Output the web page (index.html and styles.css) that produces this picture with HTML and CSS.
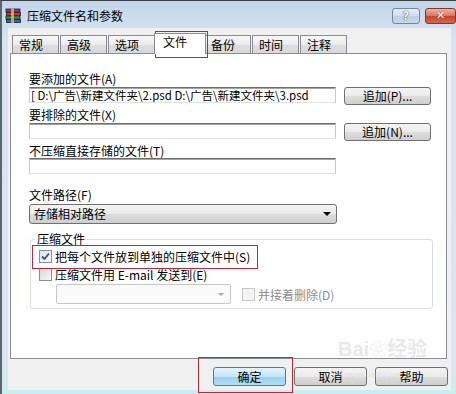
FILE: index.html
```html
<!DOCTYPE html>
<html lang="zh-CN">
<head>
    <meta charset="UTF-8">
    <title>压缩文件名和参数</title>
    <link rel="stylesheet" href="styles.css">
</head>
<body>

<div class="window">
    <div class="titlebar">
        <svg class="app-icon" width="17" height="15" viewBox="0 0 17 15">
            <rect x="1" y="1" width="14" height="3" fill="#7b3d93" stroke="#2a1a33" stroke-width="0.8"/>
            <rect x="1.5" y="4.5" width="14" height="3" fill="#c8343a" stroke="#3a1414" stroke-width="0.8"/>
            <rect x="1" y="8" width="14" height="3" fill="#3d8f3a" stroke="#163016" stroke-width="0.8"/>
            <rect x="1.5" y="11.5" width="14" height="3" fill="#3a5fae" stroke="#14203a" stroke-width="0.8"/>
            <rect x="6" y="0.5" width="3" height="14.5" fill="#d8b46a" opacity="0.85"/>
        </svg>
        <span class="title">压缩文件名和参数</span>
        <div class="caption-buttons">
            <div class="cap-btn cap-help">?</div>
            <div class="cap-btn cap-close">✕</div>
        </div>
    </div>

    <div class="client">
        <div class="tabs">
            <div class="tab">常规</div>
            <div class="tab">高级</div>
            <div class="tab">选项</div>
            <div class="tab tab-active">文件</div>
            <div class="tab">备份</div>
            <div class="tab">时间</div>
            <div class="tab">注释</div>
        </div>

        <div class="panel">
            <div class="lbl">要添加的文件(A)</div>
            <div class="row">
                <div class="edit">[ D:\广告\新建文件夹\2.psd D:\广告\新建文件夹\3.psd</div>
                <div class="btn">追加(P)...</div>
            </div>

            <div class="lbl lbl-2">要排除的文件(X)</div>
            <div class="row">
                <div class="edit"></div>
                <div class="btn">追加(N)...</div>
            </div>

            <div class="lbl lbl-3">不压缩直接存储的文件(T)</div>
            <div class="edit"></div>

            <div class="lbl lbl-4">文件路径(F)</div>
            <div class="select">
                <span>存储相对路径</span>
                <span class="arrow"></span>
            </div>

            <fieldset class="group">
                <legend>压缩文件</legend>
                <div class="check-row first">
                    <span class="check checked">
                        <svg width="9" height="9" viewBox="0 0 9 9"><path d="M1 4.5 L3.5 7 L8 1.5" fill="none" stroke="#3b4f8c" stroke-width="1.8"/></svg>
                    </span>
                    <span>把每个文件放到单独的压缩文件中(S)</span>
                </div>
                <div class="check-row">
                    <span class="check"></span>
                    <span>压缩文件用 E-mail 发送到(E)</span>
                </div>
                <div class="check-row combo-row">
                    <div class="combo"><span class="arrow arrow-off"></span></div>
                    <span class="check check-off"></span>
                    <span class="off">并接着删除(D)</span>
                </div>
            </fieldset>
        </div>

        <div class="buttons">
            <div class="btn btn-default">确定</div>
            <div class="btn">取消</div>
            <div class="btn">帮助</div>
        </div>
    </div>

    <!-- annotation boxes from the screenshot -->
    <div class="mark mark-tab"></div>
    <div class="mark mark-check"></div>
    <div class="mark mark-ok"></div>

    <div class="watermark">Bai<span class="paw">❀</span>经验<br><small>jingyan.baidu.com</small></div>
</div>

</body>
</html>
```

FILE: styles.css
```css
* {
    box-sizing: border-box;
}

body {
    margin: 0;
    font-family: "Noto Sans CJK SC", "Liberation Sans", sans-serif;
    font-size: 12px;
    color: #000;
    background: #fff;
}

.window {
    position: relative;
    width: 456px;
    height: 394px;
    display: flex;
    flex-direction: column;
    background: linear-gradient(#c3d6ea, #d7e4f1 40px, #dae6f1 360px, #c9eef0);
    border-top: 1px solid #3a3f44;
    border-left: 2px solid #5b6570;
    overflow: hidden;
}

.titlebar {
    height: 27px;
    display: flex;
    align-items: center;
    padding-left: 3px;
}

.app-icon {
    margin-right: 5px;
    margin-top: 2px;
}

.title {
    font-size: 12px;
    line-height: 14px;
    margin-top: 2px;
}

.caption-buttons {
    margin-left: auto;
    align-self: flex-start;
    margin-top: 7px;
    display: flex;
    gap: 5px;
}

.cap-btn {
    height: 16px;
    border-radius: 3px;
    text-align: center;
    font-family: "DejaVu Sans", sans-serif;
    font-weight: bold;
    line-height: 14px;
}

.cap-help {
    width: 28px;
    border: 1px solid #72889e;
    background: linear-gradient(#e6edf5, #d0dceb 50%, #bfd0e3 51%, #cad8e8);
    color: #eef3f8;
    font-size: 12px;
    text-shadow: 0 0 1px #3a4856, 0 0 1px #3a4856;
}

.cap-close {
    width: 31px;
    border: 1px solid #7a3a2c;
    background: linear-gradient(#eab2a4, #d9725c 50%, #c6452b 51%, #d2684e);
    color: #fff;
    font-size: 11px;
    text-shadow: 0 0 1px #5a1a10;
}

.client {
    flex: 1;
    margin: 0 5px 4px 6px;
    background: #f0f0f0;
    padding: 5px 0 0 2px;
    display: flex;
    flex-direction: column;
}

/* tabs */
.tabs {
    height: 20px;
    display: flex;
    align-items: flex-end;
    padding-left: 2px;
}

.tab {
    width: 47px;
    height: 18px;
    margin-right: 1px;
    padding-left: 6px;
    line-height: 17px;
    border: 1px solid #898c95;
    border-bottom: none;
    background: linear-gradient(#f7f7f7, #ececec 50%, #dedede 51%, #d8d8d8);
}

.tab-active {
    position: relative;
    z-index: 1;
    width: 52px;
    height: 21px;
    margin: 0 -2px -1px -2px;
    padding-left: 8px;
    line-height: 15px;
    background: #fff;
}

.panel {
    width: 437px;
    height: 306px;
    border: 1px solid #898c95;
    background: #fff;
    padding: 18px 0 0 18px;
}

.lbl {
    height: 14px;
    line-height: 14px;
}

.lbl-2 {
    margin-top: 3px;
}

.lbl-3 {
    margin-top: 3px;
}

.lbl-4 {
    margin-top: 14px;
}

.row {
    display: flex;
    align-items: flex-start;
    margin-top: 1px;
}

.edit {
    width: 307px;
    height: 16px;
    border: 1px solid #c9c9c9;
    border-top-color: #6e6e6e;
    border-bottom-color: #e2e2e2;
    box-shadow: inset 0 1px 0 #a4a4a4;
    padding: 1px 0 0 1px;
    font-size: 11.5px;
    line-height: 13px;
    white-space: nowrap;
    overflow: hidden;
    background: #fff;
}

.btn {
    width: 87px;
    height: 18px;
    margin-left: 8px;
    border: 1px solid #707070;
    border-radius: 3px;
    background: linear-gradient(#f3f3f3, #ebebeb 50%, #dddddd 51%, #cfcfcf);
    line-height: 16px;
    text-align: center;
}

.select {
    width: 308px;
    height: 20px;
    margin-top: 2px;
    border: 1px solid #707070;
    border-radius: 3px;
    background: linear-gradient(#f3f3f3, #ebebeb 50%, #dddddd 51%, #cfcfcf);
    padding: 0 5px 0 4px;
    line-height: 18px;
    display: flex;
    align-items: center;
    justify-content: space-between;
}

.arrow {
    width: 0;
    height: 0;
    border-left: 4px solid transparent;
    border-right: 4px solid transparent;
    border-top: 4px solid #000;
}

.arrow-off {
    border-left-width: 3px;
    border-right-width: 3px;
    border-top: 3px solid #a8a8a8;
}

/* group box */
.group {
    width: 403px;
    margin: 8px 0 0 1px;
    border: 1px solid #d5dfe5;
    border-radius: 3px;
    padding: 0 0 4px 4px;
}

.group legend {
    padding: 0 2px;
    line-height: 14px;
    font-size: 12px;
}

.check-row {
    height: 18px;
    padding-left: 4px;
    display: flex;
    align-items: center;
    gap: 3px;
}

.check-row.first {
    margin-top: 1px;
}

.check {
    width: 13px;
    height: 13px;
    border: 1px solid #8f8f8f;
    background: linear-gradient(135deg, #d8d8d8, #f6f6f6);
    display: flex;
    align-items: center;
    justify-content: center;
}

.check.checked {
    background: linear-gradient(135deg, #dfe6f2, #f6f8fb);
}

.check-off {
    margin-left: 11px;
    border-color: #c6c6c6;
    background: #f4f4f4;
}

.off {
    color: #8d8d8d;
}

.combo-row {
    height: 20px;
    margin-top: 1px;
    gap: 0;
}

.combo-row .off {
    margin-left: 3px;
}

.combo {
    width: 175px;
    height: 20px;
    margin-left: 17px;
    border: 1px solid #c8c8c8;
    border-radius: 2px;
    background: #fafafa;
    display: flex;
    align-items: center;
    justify-content: flex-end;
    padding-right: 6px;
}

/* dialog buttons */
.buttons {
    display: flex;
    justify-content: flex-end;
    margin-top: 8px;
    padding-right: 3px;
}

.buttons .btn {
    width: 73px;
    height: 19px;
    line-height: 17px;
}

.btn-default {
    border-color: #3c7fb1;
    background: linear-gradient(#e5f4fc, #c4e5f6 50%, #98d1ef 51%, #b2def5);
}

/* red annotation boxes drawn over the screenshot */
.mark {
    position: absolute;
    border: 1px solid #c0283a;
}

.mark-tab {
    left: 153px;
    top: 30px;
    width: 53px;
    height: 27px;
}

.mark-check {
    left: 30px;
    top: 244px;
    width: 226px;
    height: 24px;
}

.mark-ok {
    left: 196px;
    top: 356px;
    width: 95px;
    height: 36px;
}

.watermark {
    position: absolute;
    left: 336px;
    top: 338px;
    color: rgba(190, 190, 190, 0.35);
    font-family: "Liberation Sans", "Noto Sans CJK SC", sans-serif;
    font-size: 20px;
    font-weight: bold;
    line-height: 20px;
}

.watermark small {
    font-size: 8px;
    font-weight: normal;
    line-height: 10px;
}

.paw {
    font-size: 18px;
}
```
